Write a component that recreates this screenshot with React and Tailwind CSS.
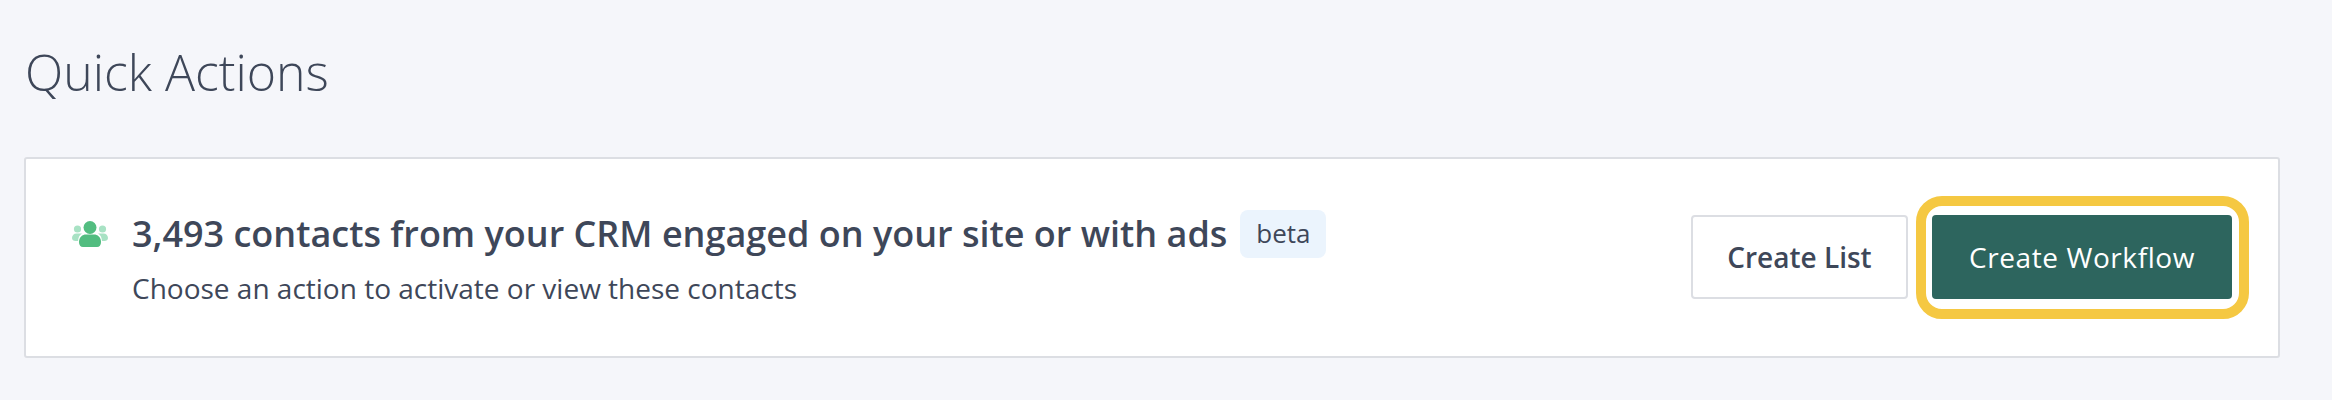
export default function App() {
  return (
    <div className="h-[400px] w-[2332px] overflow-hidden bg-[#f5f6fa] px-[24px] pt-[42px] text-[#3e4759] font-['Open_Sans',sans-serif]">
      <h1 className="m-0 pl-[1px] text-[50px] leading-[60px] font-light">Quick Actions</h1>
      <div className="mt-[55px] flex h-[201px] w-[2256px] items-center justify-between rounded-[3px] border-2 border-[#dcdee3] bg-white pl-[44px] pr-[46px]">
        <div className="flex items-start gap-[23px]">
          <svg className="ml-[1px] mt-[13.5px] h-[26px] w-[38px] shrink-0" viewBox="0 0 36 26" fill="none">
            <circle cx="5.500" cy="8" r="3.600" fill="#a8e2c4" />
            <circle cx="30.500" cy="8" r="3.600" fill="#a8e2c4" />
            <path d="M0 17c0-2.500 2-4.500 4.500-4.500H10C7.500 14 6.500 16 6 20H3.500C1.500 20 0 19 0 17z" fill="#a8e2c4" />
            <path d="M36 17c0-2.500-2-4.500-4.500-4.500H26c2.500 1.500 3.500 3.500 4 7.500h2.500c2 0 3.500-1 3.500-3z" fill="#a8e2c4" />
            <circle cx="18" cy="6.500" r="6.500" fill="#52bd80" />
            <path d="M7 21c0-5 3.500-7.500 7-7.500h8c3.500 0 7 2.500 7 7.500 0 3-1.500 5-4 5H11c-2.500 0-4-2-4-5z" fill="#52bd80" />
          </svg>
          <div className="mt-[2px]">
            <div className="flex items-center gap-[13px]">
              <span className="text-[36px] leading-[48px] font-semibold">3,493 contacts from your CRM engaged on your site or with ads</span>
              <span className="flex h-[48px] w-[86px] items-center justify-center rounded-[8px] bg-[#ebf4fd] text-[26px] font-medium">beta</span>
            </div>
            <p className="m-0 mt-[10px] text-[28px] leading-[40px]">Choose an action to activate or view these contacts</p>
          </div>
        </div>
        <div className="flex items-center gap-[24px] pb-[2px]">
          <button className="h-[84px] w-[217px] rounded-[4px] border-2 border-[#dcdee3] bg-white text-[28px] font-semibold text-[#3e4759]">Create List</button>
          <div className="relative">
            <button className="block h-[84px] w-[300px] rounded-[4px] bg-[#2d655e] text-[28px] font-medium tracking-[0.6px] text-white">Create Workflow</button>
            <div className="absolute -top-[19px] -right-[17px] -bottom-[20px] -left-[16px] rounded-[26px] border-[10px] border-[#f5c842]" />
          </div>
        </div>
      </div>
    </div>
  );
}
